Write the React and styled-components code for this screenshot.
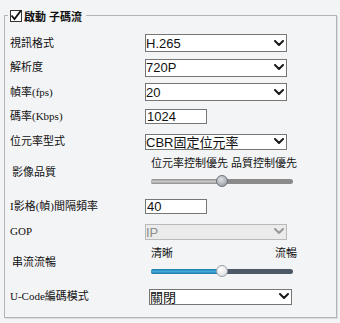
import React from 'react';
import styled, { createGlobalStyle } from 'styled-components';

const Global = createGlobalStyle`
  html, body { margin: 0; padding: 0; background: #f3f4f6; }
  body { font-family: "Liberation Serif", "Noto Sans CJK TC", serif; color: #111; }
`;

const Page = styled.div`
  width: 340px;
  height: 323px;
  box-sizing: border-box;
  padding: 15px 3px 5px 4px;
  background: #f3f4f6;
`;

const Group = styled.section`
  position: relative;
  height: 100%;
  box-sizing: border-box;
  border: 1px solid #b3b5b8;
  box-shadow: 1px 1px 0 #dcdde0;
  padding: 14.5px 0 0 5px;
  display: flex;
  flex-direction: column;
`;

const Legend = styled.label`
  position: absolute;
  top: -8px;
  left: 3px;
  height: 16px;
  display: flex;
  align-items: center;
  gap: 2px;
  padding: 0 4px 0 2px;
  background: #f3f4f6;
  font: bold 11px "Liberation Sans", "Noto Sans CJK TC", sans-serif;
  color: #111;
`;

const CheckBox = styled.span`
  width: 12px;
  height: 12px;
  box-sizing: border-box;
  border: 1px solid #333;
  background: #fff;
  display: flex;
  align-items: center;
  justify-content: center;
  overflow: visible;
  svg { overflow: visible; }
`;

const Row = styled.div`
  display: grid;
  grid-template-columns: 135px 1fr;
  align-items: center;
  height: ${p => (p.$tall ? 41 : 24.5)}px;
`;

const Label = styled.div`
  font-size: 11px;
  line-height: 14px;
  padding-left: ${p => p.$indent || 0}px;
  padding-bottom: ${p => p.$lift || 0}px;
  white-space: nowrap;
  color: #111;
`;

const SelectWrap = styled.div`
  position: relative;
  width: ${p => p.$w || 142}px;
  height: ${p => p.$h || 18}px;
  margin-left: ${p => p.$shift || 0}px;
`;

const NativeSelect = styled.select`
  appearance: none;
  -webkit-appearance: none;
  width: 100%;
  height: 100%;
  box-sizing: border-box;
  margin: 0;
  padding: 0;
  border: 1px solid #767676;
  border-radius: 0;
  background: #fff;
  font: 13px "Liberation Sans", "Noto Sans CJK TC", sans-serif;
  color: #111;
  outline: none;
  &:disabled {
    background: #ebebeb;
    border-color: #b9b9b9;
    color: #8d8d8d;
    opacity: 1;
  }
`;

const Chevron = styled.svg`
  position: absolute;
  right: 3px;
  top: 50%;
  transform: translateY(-50%);
  pointer-events: none;
`;

const TextInput = styled.input`
  width: 62px;
  height: 15px;
  box-sizing: border-box;
  margin: 0;
  padding: 0 1px;
  border: 1px solid #767676;
  border-radius: 0;
  background: #fff;
  font: 13px "Liberation Sans", sans-serif;
  line-height: 13px;
  color: #111;
  outline: none;
`;

const SliderCell = styled.div`
  align-self: start;
  padding: 3px 0 0 6px;
  display: flex;
  flex-direction: column;
`;

const SliderLabels = styled.div`
  width: 146px;
  height: 14px;
  display: flex;
  justify-content: space-between;
  font-size: 11px;
  line-height: 14px;
  white-space: nowrap;
  color: #111;
`;

const TrackArea = styled.div`
  position: relative;
  width: 142px;
  height: 12px;
  margin-top: 5px;
  display: flex;
  align-items: center;
`;

const Track = styled.div`
  width: 100%;
  height: 5px;
  border-radius: 3px;
  overflow: hidden;
  display: flex;
  background: ${p => (p.$tone === 'blue' ? '#4d5966' : '#8a8a8a')};
`;

const Fill = styled.div`
  height: 100%;
  background: ${p =>
    p.$tone === 'blue'
      ? 'linear-gradient(to bottom, #1f78a6, #3fa9db 50%, #1f78a6)'
      : 'linear-gradient(to bottom, #8c8c8c, #c9c9c9 50%, #8c8c8c)'};
`;

const Thumb = styled.div`
  position: absolute;
  top: 50%;
  width: 12px;
  height: 12px;
  box-sizing: border-box;
  border-radius: 50%;
  transform: translate(-50%, -50%);
  border: 1px solid ${p => (p.$tone === 'blue' ? '#9aa0a6' : '#6d747b')};
  background: ${p =>
    p.$tone === 'blue'
      ? 'radial-gradient(circle at 40% 35%, #ffffff, #d3d6da)'
      : 'radial-gradient(circle at 40% 35%, #dfe1e4, #8b9299)'};
`;

const ChevronIcon = ({ color = '#1a1a1a' }) => (
  <Chevron width="10" height="6" viewBox="0 0 10 6">
    <path d="M1 1 L5 5 L9 1" fill="none" stroke={color} strokeWidth="2" strokeLinecap="round" strokeLinejoin="round" />
  </Chevron>
);

const Select = ({ value, options, h, w, shift, disabled }) => (
  <SelectWrap $h={h} $w={w} $shift={shift}>
    <NativeSelect defaultValue={value} disabled={disabled}>
      {options.map(o => (
        <option key={o} value={o}>{o}</option>
      ))}
    </NativeSelect>
    <ChevronIcon color={disabled ? '#9a9a9a' : '#1a1a1a'} />
  </SelectWrap>
);

const Slider = ({ left, right, value, tone }) => (
  <SliderCell>
    <SliderLabels>
      <span>{left}</span>
      <span>{right}</span>
    </SliderLabels>
    <TrackArea>
      <Track $tone={tone}>
        <Fill $tone={tone} style={{ width: `${value}%` }} />
      </Track>
      <Thumb $tone={tone} style={{ left: `${value}%` }} />
    </TrackArea>
  </SliderCell>
);

export default function App() {
  return (
    <Page>
      <Global />
      <Group>
        <Legend>
          <CheckBox>
            <svg width="12" height="12" viewBox="0 0 12 12">
              <path d="M1.5 5.5 L4.5 9 L11 0.5" fill="none" stroke="#111" strokeWidth="1.8" />
            </svg>
          </CheckBox>
          <span>啟動 子碼流</span>
        </Legend>

        <Row>
          <Label>視訊格式</Label>
          <Select value="H.265" options={['H.264', 'H.265']} h={18} />
        </Row>
        <Row>
          <Label>解析度</Label>
          <Select value="720P" options={['720P', 'D1', 'CIF']} h={18} />
        </Row>
        <Row>
          <Label>幀率(fps)</Label>
          <Select value="20" options={['25', '20', '15', '10']} h={18} />
        </Row>
        <Row>
          <Label>碼率(Kbps)</Label>
          <TextInput defaultValue="1024" />
        </Row>
        <Row>
          <Label>位元率型式</Label>
          <Select value="CBR固定位元率" options={['CBR固定位元率', 'VBR可變位元率']} h={16} />
        </Row>
        <Row $tall>
          <Label $indent={2} $lift={3}>影像品質</Label>
          <Slider left="位元率控制優先" right="品質控制優先" value={50} tone="gray" />
        </Row>
        <Row>
          <Label>I影格(幀)間隔頻率</Label>
          <TextInput defaultValue="40" />
        </Row>
        <Row>
          <Label>GOP</Label>
          <Select value="IP" options={['IP']} h={16} disabled />
        </Row>
        <Row $tall>
          <Label $indent={2} $lift={3}>串流流暢</Label>
          <Slider left="清晰" right="流暢" value={50} tone="blue" />
        </Row>
        <Row>
          <Label>U-Code編碼模式</Label>
          <Select value="關閉" options={['關閉', '開啟']} h={16} w={143} shift={4} />
        </Row>
      </Group>
    </Page>
  );
}
